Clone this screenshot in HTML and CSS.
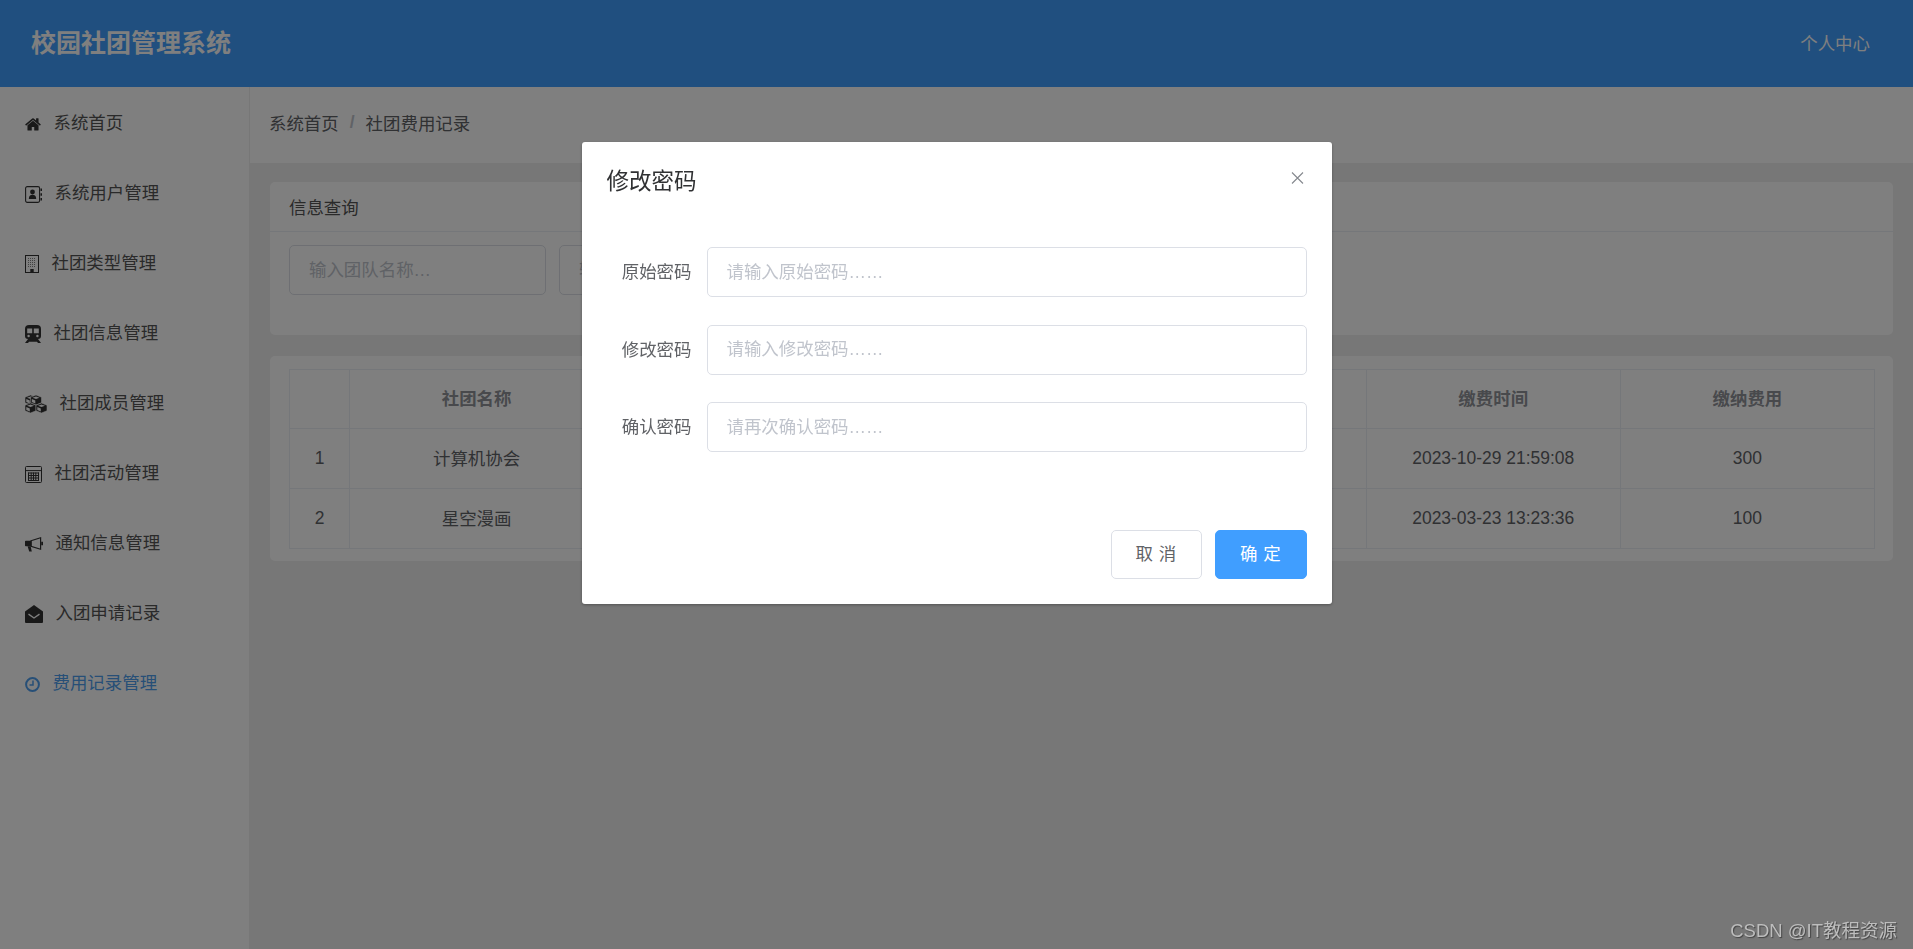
FILE: index.html
```html
<!DOCTYPE html>
<html lang="zh-CN">
<head>
    <meta charset="UTF-8">
    <title>校园社团管理系统</title>
    <link rel="stylesheet" href="styles.css">
</head>
<body>
    <div class="app">
        <header class="topbar">
            <div class="logo">校园社团管理系统</div>
            <div class="user-link">个人中心</div>
        </header>

        <div class="layout">
            <nav class="sidebar">
                <a class="nav-item">
                    <svg class="icon" width="16" height="13" viewBox="64 250 1664 1300"><path d="M1472 992v480q0 26-19 45t-45 19h-384v-384h-256v384h-384q-26 0-45-19t-19-45v-480q0-1 .5-3t.5-3l575-474 575 474q1 2 1 6zm223-69l-62 74q-8 9-21 11h-3q-13 0-21-7l-692-577-692 577q-12 8-24 7-13-2-21-11l-62-74q-8-10-7-23.5t11-21.5l719-599q32-26 76-26t76 26l244 204v-195q0-14 9-23t23-9h192q14 0 23 9t9 23v408l219 182q10 8 11 21.5t-7 23.5z"/></svg>
                    <span>系统首页</span>
                </a>
                <a class="nav-item">
                    <svg class="icon" width="17" height="17" viewBox="0 0 17 17">
                        <rect x="0.6" y="0.6" width="14" height="15.8" rx="1.6" fill="none" stroke="currentColor" stroke-width="1.1"/>
                        <circle cx="7.5" cy="6" r="2.4"/>
                        <path d="M3.8 13c0-3 1.4-4.2 3.7-4.2s3.700 1.200 3.700 4.200z"/>
                        <path d="M15.500 2.500H17V5h-1.500zM15.500 7.200H17v2.600h-1.500zM15.500 12H17v2.500h-1.500z"/>
                    </svg>
                    <span>系统用户管理</span>
                </a>
                <a class="nav-item">
                    <svg class="icon" width="14" height="18" viewBox="0 0 14 18">
                        <rect x="0.5" y="0.5" width="13" height="17" fill="none" stroke="currentColor" stroke-width="1"/>
                        <path d="M3 3.500h8M3 5.500h8M3 7.500h8M3 9.500h8M3 11.500h8" stroke="currentColor" stroke-width="1" stroke-dasharray="1 1" fill="none" opacity="0.6"/>
                        <rect x="5.300" y="14" width="3.400" height="3.200"/>
                    </svg>
                    <span>社团类型管理</span>
                </a>
                <a class="nav-item">
                    <svg class="icon" width="16" height="18" viewBox="0 0 16 18">
                        <path d="M4 0h8a4 4 0 0 1 4 4v7a3 3 0 0 1-3 3H3a3 3 0 0 1-3-3V4a4 4 0 0 1 4-4z"/>
                        <path d="M3 14L0 18h3l1-1.200h8L13 18h3l-3-4z"/>
                        <path fill="#fff" d="M2.200 3.500h5v4.800h-5zM8.800 3.500h5v4.800h-5z"/>
                        <circle fill="#fff" cx="3.600" cy="11" r="1.200"/>
                        <circle fill="#fff" cx="12.400" cy="11" r="1.200"/>
                    </svg>
                    <span>社团信息管理</span>
                </a>
                <a class="nav-item">
                    <svg class="icon" width="22" height="18" viewBox="0 0 22 18">
                        <g id="cube">
                            <path stroke="#fff" stroke-width="0.6" d="M5.500 0L11 2.200v5.600L5.500 10 0 7.800V2.200z"/>
                            <path fill="#fff" d="M5.500 1.500L9 2.800 5.500 4.100 2 2.800z"/>
                            <path fill="#fff" d="M1.300 4l3.500 1.400v3L1.300 7z"/>
                        </g>
                        <use href="#cube" x="5.500" y="0"/>
                        <use href="#cube" x="0" y="8"/>
                        <use href="#cube" x="11" y="8"/>
                    </svg>
                    <span>社团成员管理</span>
                </a>
                <a class="nav-item">
                    <svg class="icon" width="17" height="17" viewBox="0 0 17 17">
                        <rect x="0.5" y="0.5" width="16" height="16" rx="1" fill="none" stroke="currentColor" stroke-width="1"/>
                        <path d="M1 4.600h15" stroke="currentColor" stroke-width="1"/>
                        <path d="M3 7h11M3 9.500h11M3 12h11M3 14.500h11M3.500 6.500v8.500M6.200 6.500v8.500M8.500 6.500v8.500M10.800 6.500v8.500M13.500 6.500v8.500" stroke="currentColor" stroke-width="1" fill="none"/>
                    </svg>
                    <span>社团活动管理</span>
                </a>
                <a class="nav-item">
                    <svg class="icon" width="18" height="15" viewBox="0 0 18 15">
                        <path d="M0.800 3.800H6.600v5.400H0.800a.8.8 0 0 1-.8-.8V4.600a.8.8 0 0 1 .8-.8z"/>
                        <path d="M2.600 9.200h3l1.200 5.200H4.200z"/>
                        <path d="M6 3.800L15.600 0.800v11.400L6 9.200z" fill="none" stroke="currentColor" stroke-width="1.200"/>
                        <path d="M16.200 4.800H18v3.400h-1.800z"/>
                    </svg>
                    <span>通知信息管理</span>
                </a>
                <a class="nav-item">
                    <svg class="icon" width="18" height="18" viewBox="0 0 18 18">
                        <path d="M9 0l9 6.500V17a1 1 0 0 1-1 1H1a1 1 0 0 1-1-1V6.500z"/>
                        <path d="M3.500 9.200L9 13l5.500-3.800" fill="none" stroke="#fff" stroke-width="1.400"/>
                    </svg>
                    <span>入团申请记录</span>
                </a>
                <a class="nav-item active">
                    <svg class="icon" width="15" height="15" viewBox="0 0 15 15">
                        <circle cx="7.500" cy="7.500" r="6.400" fill="none" stroke="currentColor" stroke-width="2"/>
                        <path d="M8 3.500V8H4.500" fill="none" stroke="currentColor" stroke-width="1.500"/>
                    </svg>
                    <span>费用记录管理</span>
                </a>
            </nav>

            <main class="main">
                <div class="breadcrumb">
                    <span>系统首页</span>
                    <span class="separator">/</span>
                    <span>社团费用记录</span>
                </div>

                <div class="content">
                    <section class="card">
                        <div class="card-title">信息查询</div>
                        <div class="search-form">
                            <input class="search-input" type="text" placeholder="输入团队名称…">
                            <input class="search-input" type="text" placeholder="输入社团名称…">
                        </div>
                    </section>

                    <section class="card table-card">
                        <table class="data-table">
                            <colgroup>
                                <col class="col-index">
                            </colgroup>
                            <thead>
                                <tr>
                                    <th></th>
                                    <th>社团名称</th>
                                    <th></th>
                                    <th></th>
                                    <th></th>
                                    <th>缴费时间</th>
                                    <th>缴纳费用</th>
                                </tr>
                            </thead>
                            <tbody>
                                <tr>
                                    <td>1</td>
                                    <td class="cell-name">计算机协会</td>
                                    <td></td>
                                    <td></td>
                                    <td></td>
                                    <td>2023-10-29 21:59:08</td>
                                    <td>300</td>
                                </tr>
                                <tr>
                                    <td>2</td>
                                    <td class="cell-name">星空漫画</td>
                                    <td></td>
                                    <td></td>
                                    <td></td>
                                    <td>2023-03-23 13:23:36</td>
                                    <td>100</td>
                                </tr>
                            </tbody>
                        </table>
                    </section>
                </div>
            </main>
        </div>
    </div>

    <!-- change password dialog -->
    <div class="overlay">
        <div class="dialog">
            <div class="dialog-header">
                <span class="dialog-title">修改密码</span>
                <svg class="dialog-close" width="13" height="12" viewBox="0 0 13 12"><path d="M1 0.500L12 11.500M12 0.500L1 11.500" fill="none" stroke="#85888e" stroke-width="1.100"/></svg>
            </div>
            <div class="dialog-body">
                <div class="form-row">
                    <label class="form-label">原始密码</label>
                    <input class="form-input" type="password" placeholder="请输入原始密码……">
                </div>
                <div class="form-row">
                    <label class="form-label">修改密码</label>
                    <input class="form-input" type="password" placeholder="请输入修改密码……">
                </div>
                <div class="form-row">
                    <label class="form-label">确认密码</label>
                    <input class="form-input" type="password" placeholder="请再次确认密码……">
                </div>
            </div>
            <div class="dialog-footer">
                <button class="btn">取 消</button>
                <button class="btn btn-primary">确 定</button>
            </div>
        </div>
    </div>

    <div class="watermark">CSDN @IT教程资源</div>
</body>
</html>
```

FILE: styles.css
```css
* {
    box-sizing: border-box;
}

html, body {
    height: 100%;
}

body {
    margin: 0;
    overflow: hidden;
    font-family: "Liberation Sans", "Noto Sans CJK SC", sans-serif;
    font-size: 17.44px;
    color: #606266;
    background: #fff;
}

input, button {
    font-family: inherit;
    font-size: inherit;
}

.app {
    display: flex;
    flex-direction: column;
    height: 100%;
}

/* top bar */
.topbar {
    flex: none;
    display: flex;
    align-items: center;
    justify-content: space-between;
    height: 87px;
    padding: 0 43px 0 31px;
    background: #409eff;
    color: #fff;
}

.logo {
    margin-bottom: 5px;
    font-size: 25px;
    font-weight: 700;
}

.user-link {
    margin-bottom: 3px;
}

/* sidebar */
.layout {
    flex: 1;
    display: flex;
    min-height: 0;
}

.sidebar {
    flex: none;
    width: 250px;
    padding-top: 2px;
    background: #fff;
    border-right: 1px solid #eee;
}

.nav-item {
    display: flex;
    align-items: center;
    gap: 12.5px;
    height: 70px;
    padding-left: 25px;
    color: #555;
}

.nav-item span {
    margin-bottom: 5px;
}

.nav-item .icon {
    flex: none;
    fill: currentColor;
    color: #333;
}

.nav-item.active,
.nav-item.active .icon {
    color: #4f9fee;
}

/* main area */
.main {
    flex: 1;
    min-width: 0;
    background: #eee;
}

.breadcrumb {
    display: flex;
    align-items: center;
    gap: 11px;
    height: 76px;
    padding: 0 0 5px 19px;
    background: #fff;
}

.separator {
    font-weight: 700;
    color: #c0c4cc;
}

.content {
    display: flex;
    flex-direction: column;
    gap: 21px;
    padding: 19px 20px;
}

.card {
    background: #fff;
    border-radius: 5px;
}

.card-title {
    display: flex;
    align-items: center;
    height: 50px;
    padding-left: 19px;
    border-bottom: 1px solid #ebeef5;
    color: #555;
}

.search-form {
    display: flex;
    gap: 13px;
    height: 103px;
    padding: 13px 19px 0;
}

.search-input {
    width: 257px;
    height: 50px;
    padding: 0 19px;
    border: 1px solid #dcdfe6;
    border-radius: 5px;
    background: #fff;
}

.search-input::placeholder,
.form-input::placeholder {
    color: #c0c4cc;
    opacity: 1;
}

.table-card {
    padding: 13px 18px 12px 19px;
}

.data-table {
    width: 100%;
    table-layout: fixed;
    border-collapse: collapse;
    text-align: center;
}

.col-index {
    width: 60px;
}

.data-table th,
.data-table td {
    border: 1px solid #ebeef5;
}

.data-table th {
    height: 59px;
    padding: 0 0 3px;
    font-weight: 700;
    color: #909399;
}

.data-table td {
    height: 60px;
    padding: 0;
}

.data-table .cell-name {
    padding-bottom: 3px;
}

/* dialog */
.overlay {
    position: fixed;
    top: 0;
    left: 0;
    right: 0;
    bottom: 0;
    display: flex;
    justify-content: center;
    align-items: flex-start;
    padding-top: 142px;
    background: rgba(0, 0, 0, 0.5);
}

.dialog {
    width: 750px;
    padding-bottom: 25px;
    border-radius: 3px;
    background: #fff;
    box-shadow: 0 1px 3px rgba(0, 0, 0, 0.3);
}

.dialog-header {
    display: flex;
    align-items: center;
    justify-content: space-between;
    height: 78px;
    padding: 0 28px 0 25px;
}

.dialog-title {
    margin-bottom: 5px;
    font-size: 22.5px;
    color: #303133;
}

.dialog-close {
    margin-top: -6px;
}

.dialog-body {
    display: flex;
    flex-direction: column;
    gap: 27.5px;
    padding: 27px 25px 0 24px;
}

.form-row {
    display: flex;
    align-items: center;
    gap: 15px;
}

.form-label {
    flex: none;
    width: 86px;
    padding-bottom: 3px;
    text-align: right;
}

.form-input {
    flex: 1;
    height: 50px;
    padding: 0 19px;
    border: 1px solid #dcdfe6;
    border-radius: 5px;
    outline: none;
}

.dialog-footer {
    display: flex;
    justify-content: flex-end;
    gap: 13px;
    margin-top: 78px;
    padding-right: 25px;
}

.btn {
    width: 91px;
    height: 49px;
    padding: 0 0 4px;
    border: 1px solid #dcdfe6;
    border-radius: 5px;
    background: #fff;
    color: #606266;
    letter-spacing: 0.5px;
}

.btn-primary {
    width: 92px;
    border-color: #409eff;
    background: #409eff;
    color: #fff;
}

/* site stamp on top of the capture */
.watermark {
    position: fixed;
    right: 16px;
    bottom: 7px;
    font-size: 18.5px;
    color: #bdbdbd;
    text-shadow: 1px 1px 1px #444;
}
```
